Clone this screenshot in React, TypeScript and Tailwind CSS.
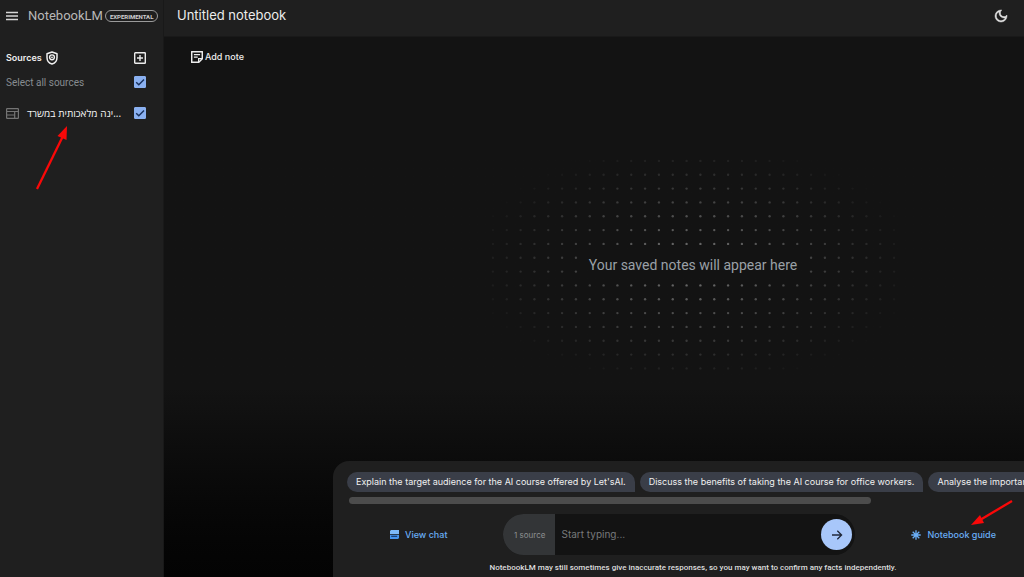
import type { ReactNode } from "react";

const DOT_PITCH = 14;
const DOT_COLUMNS = 30;
const DOT_ROWS = 16;

const suggestions = [
  "Explain the target audience for the AI course offered by Let'sAI.",
  "Discuss the benefits of taking the AI course for office workers.",
  "Analyse the importance of AI skills in the modern workplace.",
];

function MenuIcon() {
  return (
    <svg viewBox="0 0 12 10" className="h-2.5 w-3" fill="none" stroke="#d6d6d6" strokeWidth="1.4" aria-hidden="true">
      <path d="M0 1.5h12M0 5h12M0 8.5h12" />
    </svg>
  );
}

function MoonIcon() {
  return (
    <svg
      viewBox="0 0 24 24"
      className="size-4"
      fill="#e6e6e6"
      stroke="#e6e6e6"
      strokeWidth="0.7"
      aria-hidden="true"
    >
      <path d="M12 21q-3.750 0-6.375-2.625T3 12q0-3.750 2.625-6.375T12 3q.35 0 .688.025t.662.075q-1.025.725-1.638 1.888T11.100 7.500q0 2.250 1.575 3.825T16.500 12.900q1.375 0 2.525-.613T20.900 10.650q.05.325.075.662T21 12q0 3.750-2.625 6.375T12 21zm0-2q2.200 0 3.950-1.213T18.500 14.625q-.5.125-1 .2t-1 .075q-3.075 0-5.238-2.163T9.100 7.500q0-.5.075-1t.2-1q-1.950.8-3.163 2.550T5 12q0 2.900 2.050 4.950T12 19z" />
    </svg>
  );
}

function ShieldIcon() {
  return (
    <svg viewBox="0 0 12 14" className="h-3.5 w-3" fill="none" stroke="#efefef" strokeWidth="1.5" aria-hidden="true">
      <path d="M6 1 11 2.800V6.500C11 9.600 9 12.100 6 13 3 12.100 1 9.600 1 6.500V2.800Z" strokeLinejoin="round" />
      <circle cx="6" cy="6.300" r="2.400" strokeWidth="1.400" />
      <circle cx="6" cy="6.300" r="0.900" fill="#efefef" stroke="none" />
    </svg>
  );
}

function AddBoxIcon() {
  return (
    <svg viewBox="0 0 12 12" className="size-3" fill="none" stroke="#ececec" strokeWidth="1.4" aria-hidden="true">
      <rect x="0.700" y="0.700" width="10.600" height="10.600" rx="0.600" />
      <path d="M6 3v6M3 6h6" />
    </svg>
  );
}

function WebIcon() {
  return (
    <svg viewBox="0 0 13 11" className="h-[11px] w-[13px]" fill="none" stroke="#747474" strokeWidth="1.2" aria-hidden="true">
      <rect x="0.600" y="0.600" width="11.800" height="9.800" rx="0.600" />
      <path d="M0.600 3.500h11.800M0.600 7h8M8.700 3.500v7" />
    </svg>
  );
}

function NoteIcon() {
  return (
    <svg viewBox="0 0 12 12" className="size-3" fill="none" stroke="#ececec" strokeWidth="1.5" aria-hidden="true">
      <path d="M7.800 11.300H0.700V0.700h10.600v7Z" strokeLinejoin="round" />
      <path d="M7.600 11V7.600H11M2.900 3.700h6.200M2.900 6.200h3.800" strokeWidth="1.200" />
    </svg>
  );
}

function ChatIcon() {
  return (
    <svg viewBox="0 0 9 9" className="size-[9px]" aria-hidden="true">
      <path d="M1 0H9V4H0V1Z" fill="#7db9f8" />
      <path d="M0 4.800H9V8L8 9H0Z" fill="#4794ec" />
      <path d="M1.200 5.700h6v1.200h-6z" fill="#163a70" />
    </svg>
  );
}

function SparkIcon() {
  return (
    <svg viewBox="0 0 10 10" className="size-2.5" stroke="#6aaef6" strokeWidth="1.3" aria-hidden="true">
      <path d="M5 0.300v9.400M0.300 5h9.400M1.700 1.700l6.600 6.600M8.300 1.700 1.700 8.300" />
    </svg>
  );
}

function ArrowIcon() {
  return (
    <svg viewBox="0 0 12 12" className="size-3" fill="none" stroke="#20283a" strokeWidth="1.3" aria-hidden="true">
      <path d="M1 6h9.500M6.300 1.700 10.600 6 6.300 10.300" />
    </svg>
  );
}

function SourceCheckbox({ id }: { id: string }) {
  return (
    <span className="grid size-3 shrink-0">
      <input
        id={id}
        type="checkbox"
        defaultChecked
        className="peer col-start-1 row-start-1 size-3 appearance-none rounded-[1px] border border-[#8ab0f0] checked:bg-[#8ab0f0]"
      />
      <svg
        viewBox="0 0 12 12"
        className="pointer-events-none invisible col-start-1 row-start-1 size-3 peer-checked:visible"
        fill="none"
        stroke="#17305c"
        strokeWidth="1.4"
        aria-hidden="true"
      >
        <path d="M2.200 6.200 4.800 8.800 10 3.400" />
      </svg>
    </span>
  );
}

function DotField() {
  const midColumn = (DOT_COLUMNS - 1) / 2;
  const midRow = (DOT_ROWS - 1) / 2;
  const dots: ReactNode[] = [];
  for (let row = 0; row < DOT_ROWS; row++) {
    for (let column = 0; column < DOT_COLUMNS; column++) {
      const besideCaption = column < 7 || column > 22;
      if ((row === 7 || row === 8) && !besideCaption) continue;
      const distance = Math.hypot((column - midColumn) / 16.5, (row - midRow) / 9);
      const opacity = Math.max(0, 1 - distance) * 0.42;
      if (opacity === 0) continue;
      dots.push(
        <circle
          key={`${row}-${column}`}
          cx={(column + 0.5) * DOT_PITCH}
          cy={(row + 0.5) * DOT_PITCH}
          r="1.2"
          opacity={opacity}
        />,
      );
    }
  }
  return (
    <svg
      viewBox={`0 0 ${DOT_COLUMNS * DOT_PITCH} ${DOT_ROWS * DOT_PITCH}`}
      className="col-start-1 row-start-1 w-[415px]"
      fill="#ffffff"
      aria-hidden="true"
    >
      {dots}
    </svg>
  );
}

function Sidebar() {
  return (
    <aside className="flex w-[164px] shrink-0 flex-col border-r border-[#191919] bg-[#1f1f1f]">
      <div className="flex h-8 items-center pl-1.5">
        <button type="button" aria-label="Menu" className="mr-2.5">
          <MenuIcon />
        </button>
        <span className="font-['Roboto',sans-serif] text-[13px] text-[#b8b8b8]">NotebookLM</span>
        <span className="ml-0.5 flex h-3 items-center rounded-full border border-[#9a9a9a] px-1 font-['Roboto',sans-serif] text-[6px] font-bold text-[#d0d0d0]">
          EXPERIMENTAL
        </span>
      </div>
      <div className="mt-4 flex h-5 items-center pr-[17px] pl-1.5">
        <h2 className="text-[9px] font-semibold text-[#ededed]">Sources</h2>
        <span className="ml-1">
          <ShieldIcon />
        </span>
        <button type="button" aria-label="Add source" className="ml-auto">
          <AddBoxIcon />
        </button>
      </div>
      <div className="mt-1 flex h-5 items-center justify-between pr-[17px] pl-1.5">
        <label htmlFor="all-sources" className="font-['Roboto',sans-serif] text-[10px] text-[#878c90]">
          Select all sources
        </label>
        <SourceCheckbox id="all-sources" />
      </div>
      <div className="mt-[11px] flex h-5 items-center pr-[17px] pl-1.5">
        <WebIcon />
        <label
          htmlFor="source-1"
          className="ml-2 font-['Open_Sans',sans-serif] text-[10px] font-medium whitespace-nowrap text-[#f4f4f4]"
        >
          ינה מלאכותית במשרד...
        </label>
        <span className="ml-auto">
          <SourceCheckbox id="source-1" />
        </span>
      </div>
    </aside>
  );
}

function ChatPanel() {
  return (
    <section className="mx-auto w-full max-w-[720px] rounded-t-2xl bg-[#1f1f1f] pt-[11px]">
      <ul className="flex gap-[5px] overflow-hidden pl-3.5">
        {suggestions.map((text) => (
          <li key={text} className="flex shrink-0">
            <button
              type="button"
              className="h-5 rounded-full rounded-br-xs bg-[#3a3e48] px-[9px] text-[9px] whitespace-nowrap text-[#f0f0f0]"
            >
              {text}
            </button>
          </li>
        ))}
      </ul>
      <div className="mt-[5px] ml-4 h-[7px] w-[522px] rounded-full bg-[#4c4c4c]" />
      <div className="mt-2.5 flex items-center justify-center gap-14">
        <button type="button" className="flex items-center gap-1.5 text-[9px] font-medium text-[#6aaef6]">
          <ChatIcon />
          View chat
        </button>
        <form className="flex h-[41px] w-[352px] items-center overflow-hidden rounded-full bg-[#131313] pr-[3px]">
          <label
            htmlFor="prompt"
            className="flex h-full w-[52px] shrink-0 items-center justify-end bg-[#333537] pr-2.5 text-[8px] text-[#8d8f91]"
          >
            1 source
          </label>
          <input
            id="prompt"
            type="text"
            placeholder="Start typing..."
            className="min-w-0 flex-1 bg-transparent px-1.5 text-[10px] text-[#e6e6e6] outline-none placeholder:text-[#77797b]"
          />
          <button
            type="button"
            aria-label="Send"
            className="flex size-[31px] shrink-0 items-center justify-center rounded-full bg-[#a8c7fa]"
          >
            <ArrowIcon />
          </button>
        </form>
        <button type="button" className="flex items-center gap-1.5 text-[9px] font-medium text-[#6aaef6]">
          <SparkIcon />
          Notebook guide
        </button>
      </div>
      <p className="mt-[7px] pb-[3px] text-center font-['Roboto',sans-serif] text-[8px] leading-3 font-medium text-[#dedede]">
        NotebookLM may still sometimes give inaccurate responses, so you may want to confirm any facts independently.
      </p>
    </section>
  );
}

function Pointers() {
  return (
    <>
      <svg viewBox="0 0 34 66" className="absolute top-[125px] left-[35px] h-[66px] w-[34px]" aria-hidden="true">
        <path d="M2 64 28 11" stroke="#fa0808" strokeWidth="2.300" />
        <path d="M32 1 22.500 11 31.500 15Z" fill="#fa0808" />
      </svg>
      <svg viewBox="0 0 44 28" className="absolute top-[499px] left-[970px] h-7 w-11" aria-hidden="true">
        <path d="M42 2 10 21" stroke="#fa0808" strokeWidth="2.300" />
        <path d="M1 26 10 16 14 24Z" fill="#fa0808" />
      </svg>
    </>
  );
}

export default function App() {
  return (
    <div className="relative flex min-h-screen overflow-hidden bg-[#131313] font-['Inter',sans-serif]">
      <Sidebar />
      <main className="flex min-w-0 flex-1 flex-col">
        <header className="flex h-[37px] items-center justify-between border-b border-[#191919] bg-[#1f1f1f] pr-[15px] pb-1 pl-[13px]">
          <h1 className="text-[13px] text-[#ececec]">Untitled notebook</h1>
          <button type="button" aria-label="Dark mode">
            <MoonIcon />
          </button>
        </header>
        <div className="-mr-[198px] flex flex-1 flex-col bg-linear-to-b from-[#131313] from-65% to-[#030303]">
          <div className="flex h-8 items-end pl-[27px]">
            <button type="button" className="flex h-6 items-center gap-0.5 text-[9px] font-medium text-[#ededed]">
              <NoteIcon />
              Add note
            </button>
          </div>
          <div className="grid flex-1 place-content-center place-items-center">
            <DotField />
            <p className="col-start-1 row-start-1 font-['Roboto',sans-serif] text-sm text-[#9aa0a6]">
              Your saved notes will appear here
            </p>
          </div>
          <ChatPanel />
        </div>
      </main>
      <Pointers />
    </div>
  );
}
